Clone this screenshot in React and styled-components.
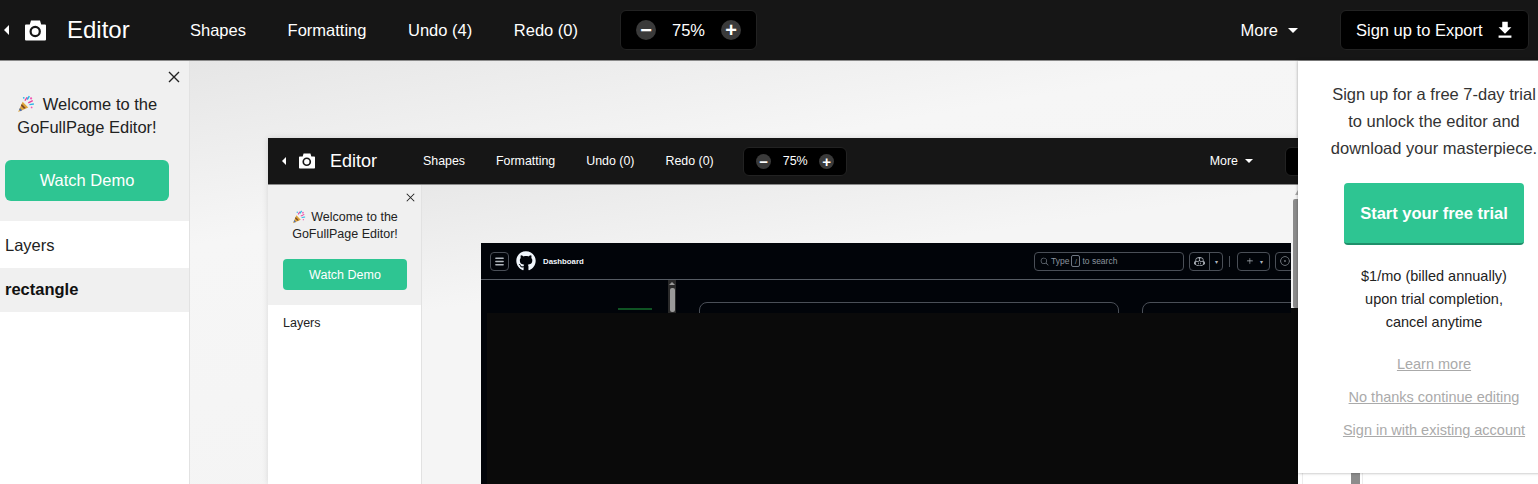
import React from 'react';
import styled, { createGlobalStyle, ThemeProvider, useTheme } from 'styled-components';
import { FaGithub } from 'react-icons/fa';
import { GoCopilot, GoSearch, GoIssueOpened, GoPlus } from 'react-icons/go';
import { Menu } from 'lucide-react';

const outer = {
  frameWidth: '1538px', frameHeight: '484px', shadow: 'none',
  barHeight: 60, brandWidth: 190, brandPad: 4, caretSize: 5, cameraGap: 16, cameraSize: 21, titleGap: 21,
  titleFont: 24, navFont: 16.5, navGap: 41.6,
  zoomGap: 42, zoomWidth: 137, zoomHeight: 40, zoomPad: 15, zoomFont: 16.5, circle: 20, circleIcon: 12,
  moreCaret: 10, moreGap: 10, exportWidth: 189, exportRight: 9, exportGap: 42, exportFont: 16.5, exportIcon: 22,
  sideWidth: 190, sidePadLeft: 5, sidePadRight: 20, welcomeTop: 32, welcomeFont: 16.5, welcomeLine: 23,
  popper: 18, popperGap: 8, welcomeGap: 21, demoHeight: 41, demoFont: 16.5, demoRadius: 6, demoBottom: 20,
  rowHeight: 47, rowNudge: 1, rowFont: 16.5, closeSize: 12, closeTop: 10, closeRight: 9,
  canvasPad: '77px 0 0 78px',
  canvasBg: 'linear-gradient(170deg, #e6e6e6 0%, #f6f6f6 28%, #f3f3f3 100%)',
};

const nested = {
  ...outer,
  frameWidth: '1270px', frameHeight: '346px', shadow: '0 0 6px rgba(0, 0, 0, 0.12)',
  barHeight: 46, brandWidth: 155, brandPad: 14, caretSize: 4, cameraGap: 13, cameraSize: 16, titleGap: 15,
  titleFont: 18, navFont: 12.4, navGap: 31,
  zoomGap: 29.5, zoomWidth: 104, zoomHeight: 29, zoomPad: 12, zoomFont: 12.5, circle: 15, circleIcon: 9,
  moreCaret: 8, moreGap: 7, exportWidth: 145, exportRight: 108, exportGap: 32, exportFont: 12.5, exportIcon: 16,
  sideWidth: 154, sidePadLeft: 15, sidePadRight: 14, welcomeTop: 24, welcomeFont: 12.5, welcomeLine: 17,
  popper: 14, popperGap: 5, welcomeGap: 16, demoHeight: 31, demoFont: 12.5, demoRadius: 4, demoBottom: 15,
  rowHeight: 36, rowNudge: 0, rowFont: 12.5, closeSize: 9, closeTop: 8, closeRight: 6,
  canvasPad: '58px 0 0 59px',
  canvasBg: 'linear-gradient(172deg, #e8e8e8 0%, #f5f5f5 30%)',
};

const CameraIcon = ({ size }) => (
  <svg width={size} height={size} viewBox="0 0 21 20">
    <path
      d="M6 0h9l1.2 4H20a1 1 0 011 1v14a1 1 0 01-1 1H1a1 1 0 01-1-1V5a1 1 0 011-1h3.8z"
      fill="#fff"
    />
    <circle cx="10.2" cy="11" r="4.6" fill="#fff" stroke="#161616" strokeWidth="2.2" />
  </svg>
);

const PartyPopper = ({ size }) => (
  <svg width={size} height={size} viewBox="0 0 16 16" style={{ verticalAlign: '-3px' }}>
    <path d="M1 15 L5 6 L10 11 Z" fill="#e0a63a" />
    <path d="M2.6 11.5 L4.6 13.6 L3 14.4 L1.9 13.2 Z" fill="#4a6fb5" />
    <path d="M4.2 8 L7.8 11.6 L6.2 12.3 L3.5 9.6 Z" fill="#7a4a2a" />
    <path d="M7 5 L9 2" stroke="#e83e9c" strokeWidth="1.2" />
    <path d="M10 7 L14 5" stroke="#e83e9c" strokeWidth="1.2" />
    <path d="M9 4 L11 1" stroke="#2eb4e6" strokeWidth="1.4" />
    <path d="M11 8.5 L15 8" stroke="#2eb4e6" strokeWidth="1.2" />
    <circle cx="12.5" cy="3" r="1" fill="#f25ab5" />
    <circle cx="6" cy="2.5" r="0.8" fill="#2eb4e6" />
    <circle cx="13" cy="11" r="0.8" fill="#f25ab5" />
  </svg>
);

const DownloadIcon = ({ size }) => (
  <svg width={size} height={size} viewBox="0 0 24 24" fill="#fff">
    <path d="M19 9h-4V3H9v6H5l7 7 7-7zM5 18v2.4h14V18H5z" />
  </svg>
);

const CloseIcon = ({ size }) => (
  <svg width={size} height={size} viewBox="0 0 12 12" stroke="#222" strokeWidth="1.4">
    <path d="M1 1 L11 11 M11 1 L1 11" />
  </svg>
);

const EditorFrame = ({ undo, children, layers, after }) => {
  const theme = useTheme();
  return (
    <Frame>
      <TopBar>
        <Brand>
          <BackCaret />
          <CameraSlot><CameraIcon size={theme.cameraSize} /></CameraSlot>
          <Title>Editor</Title>
        </Brand>
        <NavRow>
          <NavItem>Shapes</NavItem>
          <NavItem>Formatting</NavItem>
          <NavItem>Undo ({undo})</NavItem>
          <NavItem>Redo (0)</NavItem>
        </NavRow>
        <ZoomBox>
          <ZoomCircle>&minus;</ZoomCircle>
          <span>75%</span>
          <ZoomCircle>+</ZoomCircle>
        </ZoomBox>
        <More>More<MoreCaret /></More>
        <ExportButton>
          Sign up to Export
          <DownloadIcon size={theme.exportIcon} />
        </ExportButton>
      </TopBar>
      <Body>
        <Sidebar>
          <CloseButton><CloseIcon size={theme.closeSize} /></CloseButton>
          <Welcome>
            <PopperSlot><PartyPopper size={theme.popper} /></PopperSlot>
            Welcome to the<br />GoFullPage Editor!
          </Welcome>
          <DemoButton>Watch Demo</DemoButton>
          <LayersList>
            <LayerRow>Layers</LayerRow>
            {layers}
          </LayersList>
        </Sidebar>
        <Canvas>{children}</Canvas>
        {after}
      </Body>
    </Frame>
  );
};

const GithubPage = () => (
  <Shot>
    <ShotHeader>
      <ShotButton $w={19}><Menu size={11} strokeWidth={3} /></ShotButton>
      <FaGithub size={20} color="#f0f6fc" />
      <ShotTitle>Dashboard</ShotTitle>
      <SearchBox>
        <GoSearch size={9} />
        <span>Type</span>
        <SlashKey>/</SlashKey>
        <span>to search</span>
      </SearchBox>
      <SplitButton>
        <SplitPart $w={19}><GoCopilot size={11} /></SplitPart>
        <SplitPart $w={12} $divider>▾</SplitPart>
      </SplitButton>
      <HeaderRule />
      <ShotButton $w={33} $pull={2}><GoPlus size={10} /><TinyCaret>▾</TinyCaret></ShotButton>
      <ShotButton $w={19} $pull={3}><GoIssueOpened size={10} /></ShotButton>
    </ShotHeader>
    <ShotBody>
      <GreenBar />
      <ShotScroll><ShotArrow /><ShotThumb /></ShotScroll>
      <ShotCard $w={420} />
      <ShotCard $w={200} />
    </ShotBody>
  </Shot>
);

export default function App() {
  return (
    <ThemeProvider theme={outer}>
      <GlobalStyle />
      <Page>
        <EditorFrame undo={4} layers={<ActiveLayer>rectangle</ActiveLayer>}>
          <ThemeProvider theme={nested}>
            <EditorFrame
              undo={0}
              after={
                <HiddenPanel>
                  <PanelStub><StubThumb /></PanelStub>
                </HiddenPanel>
              }
            >
              <GithubPage />
              <CanvasScroll>
                <CanvasArrow />
                <CanvasThumb />
                <ScrollFoot />
              </CanvasScroll>
              <RectangleLayer />
            </EditorFrame>
          </ThemeProvider>
        </EditorFrame>
        <UpsellPanel>
          <UpsellLead>
            Sign up for a free 7-day trial<br />to unlock the editor and<br />download your masterpiece.
          </UpsellLead>
          <TrialButton>Start your free trial</TrialButton>
          <PriceNote>
            $1/mo (billed annually)<br />upon trial completion,<br />cancel anytime
          </PriceNote>
          <PanelLink>Learn more</PanelLink>
          <PanelLink>No thanks continue editing</PanelLink>
          <PanelLink>Sign in with existing account</PanelLink>
        </UpsellPanel>
      </Page>
    </ThemeProvider>
  );
}

const GlobalStyle = createGlobalStyle`
  html, body {
    margin: 0;
    padding: 0;
    background: #fff;
    overflow: hidden;
  }
  body {
    font-family: "Liberation Sans", Arial, sans-serif;
  }
`;

const Page = styled.div`
  position: relative;
  width: 1538px;
  height: 484px;
  overflow: hidden;
`;

const Frame = styled.div`
  display: flex;
  flex-direction: column;
  flex: none;
  width: ${p => p.theme.frameWidth};
  height: ${p => p.theme.frameHeight};
  box-shadow: ${p => p.theme.shadow};
`;

const TopBar = styled.header`
  display: flex;
  align-items: center;
  flex: none;
  height: ${p => p.theme.barHeight}px;
  border-bottom: 1px solid #8a8a8a;
  background: #161616;
  color: #fff;
`;

const Brand = styled.div`
  display: flex;
  align-items: center;
  flex: none;
  box-sizing: border-box;
  width: ${p => p.theme.brandWidth}px;
  padding-left: ${p => p.theme.brandPad}px;
`;

const BackCaret = styled.span`
  width: 0;
  height: 0;
  border-top: ${p => p.theme.caretSize}px solid transparent;
  border-bottom: ${p => p.theme.caretSize}px solid transparent;
  border-right: ${p => p.theme.caretSize}px solid #fff;
`;

const CameraSlot = styled.span`
  display: inline-flex;
  margin-left: ${p => p.theme.cameraGap}px;
  margin-right: ${p => p.theme.titleGap}px;
`;

const Title = styled.span`
  font-size: ${p => p.theme.titleFont}px;
`;

const NavRow = styled.nav`
  display: flex;
  gap: ${p => p.theme.navGap}px;
`;

const NavItem = styled.span`
  font-size: ${p => p.theme.navFont}px;
`;

const ZoomBox = styled.div`
  display: flex;
  align-items: center;
  justify-content: space-between;
  flex: none;
  box-sizing: border-box;
  margin-left: ${p => p.theme.zoomGap}px;
  padding: 0 ${p => p.theme.zoomPad}px;
  border: 1px solid #222;
  border-radius: 6px;
  width: ${p => p.theme.zoomWidth}px;
  height: ${p => p.theme.zoomHeight}px;
  background: #000;
  font-size: ${p => p.theme.zoomFont}px;
`;

const ZoomCircle = styled.span`
  display: flex;
  align-items: center;
  justify-content: center;
  border-radius: 50%;
  width: ${p => p.theme.circle}px;
  height: ${p => p.theme.circle}px;
  background: #3a3a3a;
  font-size: ${p => p.theme.circle}px;
  font-weight: bold;
  line-height: 1;
`;

const More = styled.span`
  display: flex;
  align-items: center;
  margin-left: auto;
  font-size: ${p => p.theme.navFont}px;
`;

const MoreCaret = styled.span`
  margin-left: ${p => p.theme.moreGap}px;
  border-top: ${p => p.theme.moreCaret / 2}px solid #fff;
  border-left: ${p => p.theme.moreCaret / 2}px solid transparent;
  border-right: ${p => p.theme.moreCaret / 2}px solid transparent;
`;

const ExportButton = styled.div`
  display: flex;
  align-items: center;
  justify-content: space-between;
  flex: none;
  box-sizing: border-box;
  margin-left: ${p => p.theme.exportGap}px;
  margin-right: ${p => p.theme.exportRight}px;
  padding: 0 12px 0 15px;
  border: 1px solid #222;
  border-radius: 6px;
  width: ${p => p.theme.exportWidth}px;
  height: ${p => p.theme.zoomHeight}px;
  background: #000;
  font-size: ${p => p.theme.exportFont}px;
`;

const Body = styled.div`
  display: flex;
  flex: 1;
  min-height: 0;
`;

const Sidebar = styled.aside`
  position: relative;
  flex: none;
  box-sizing: border-box;
  border-right: 1px solid #e2e2e2;
  width: ${p => p.theme.sideWidth}px;
  padding-top: ${p => p.theme.welcomeTop}px;
  overflow: hidden;
  background: #f0f0f0;
`;

const CloseButton = styled.span`
  position: absolute;
  top: ${p => p.theme.closeTop}px;
  right: ${p => p.theme.closeRight}px;
  display: flex;
`;

const Welcome = styled.div`
  padding: 0 ${p => p.theme.sidePadRight}px 0 ${p => p.theme.sidePadLeft}px;
  color: #222;
  font-size: ${p => p.theme.welcomeFont}px;
  line-height: ${p => p.theme.welcomeLine}px;
  text-align: center;
`;

const PopperSlot = styled.span`
  margin-right: ${p => p.theme.popperGap}px;
`;

const DemoButton = styled.div`
  display: flex;
  align-items: center;
  justify-content: center;
  box-sizing: border-box;
  margin: ${p => p.theme.welcomeGap}px ${p => p.theme.sidePadRight}px ${p => p.theme.demoBottom}px ${p => p.theme.sidePadLeft}px;
  border-radius: ${p => p.theme.demoRadius}px;
  height: ${p => p.theme.demoHeight}px;
  background: #2ec592;
  color: #fff;
  font-size: ${p => p.theme.demoFont}px;
`;

const LayersList = styled.div`
  height: 400px;
  background: #fff;
`;

const LayerRow = styled.div`
  display: flex;
  align-items: center;
  box-sizing: border-box;
  height: ${p => p.theme.rowHeight}px;
  padding-top: ${p => p.theme.rowNudge}px;
  padding-left: ${p => p.theme.sidePadLeft}px;
  color: #222;
  font-size: ${p => p.theme.rowFont}px;
`;

const ActiveLayer = styled(LayerRow)`
  height: 44px;
  padding-top: 0;
  padding-bottom: 2px;
  background: #f0f0f0;
  color: #111;
  font-weight: bold;
`;

const Canvas = styled.main`
  position: relative;
  display: flex;
  flex: 1;
  min-width: 0;
  padding: ${p => p.theme.canvasPad};
  overflow: hidden;
  background: ${p => p.theme.canvasBg};
`;

const Shot = styled.section`
  flex: 1;
  min-width: 0;
  background: #010409;
`;

const ShotHeader = styled.div`
  display: flex;
  align-items: center;
  gap: 7px;
  box-sizing: border-box;
  border-bottom: 1px solid #555b63;
  height: 37px;
  padding: 0 0 0 9px;
  overflow: hidden;
  color: #b0b6bd;
`;

const ShotButton = styled.span`
  display: flex;
  align-items: center;
  justify-content: center;
  flex: none;
  box-sizing: border-box;
  margin-right: ${p => -(p.$pull || 0)}px;
  border: 1px solid #4a4f57;
  border-radius: 4px;
  width: ${p => p.$w}px;
  height: 19px;
  color: #b0b6bd;
`;

const TinyCaret = styled.span`
  margin-left: 5px;
  font-size: 6px;
`;

const ShotTitle = styled.span`
  margin-right: auto;
  color: #f0f6fc;
  font-size: 7.8px;
  font-weight: bold;
`;

const SearchBox = styled.div`
  display: flex;
  align-items: center;
  gap: 2px;
  flex: none;
  box-sizing: border-box;
  margin-right: -2px;
  border: 1px solid #4a4f57;
  border-radius: 4px;
  width: 150px;
  height: 19px;
  padding-left: 5px;
  color: #8b949e;
  font-size: 8.5px;
`;

const SlashKey = styled.span`
  display: flex;
  align-items: center;
  justify-content: center;
  border: 1px solid #6e7681;
  border-radius: 2px;
  width: 7px;
  height: 10px;
  font-size: 7px;
`;

const SplitButton = styled.div`
  display: flex;
  flex: none;
  box-sizing: border-box;
  margin-right: -1px;
  border: 1px solid #4a4f57;
  border-radius: 4px;
  height: 19px;
  color: #b0b6bd;
`;

const SplitPart = styled.span`
  display: flex;
  align-items: center;
  justify-content: center;
  width: ${p => p.$w}px;
  border-left: ${p => (p.$divider ? '1px solid #4a4f57' : 'none')};
  font-size: 6px;
`;

const HeaderRule = styled.span`
  flex: none;
  width: 1px;
  height: 11px;
  background: #4a4f57;
`;

const ShotBody = styled.div`
  display: flex;
  align-items: flex-start;
  height: 34px;
  padding-left: 137px;
  overflow: hidden;
`;

const GreenBar = styled.span`
  flex: none;
  margin-top: 28px;
  width: 34px;
  height: 2px;
  background: #0f5323;
`;

const ShotScroll = styled.div`
  display: flex;
  flex-direction: column;
  align-items: center;
  flex: none;
  margin-left: 16px;
  width: 8px;
  height: 34px;
  background: #2a2a2a;
`;

const ShotArrow = styled.span`
  margin-top: 2px;
  border-bottom: 3px solid #999;
  border-left: 3px solid transparent;
  border-right: 3px solid transparent;
`;

const ShotThumb = styled.span`
  margin-top: 3px;
  border-radius: 2px;
  width: 5px;
  height: 24px;
  background: #999;
`;

const ShotCard = styled.div`
  flex: none;
  box-sizing: border-box;
  margin: 22px 0 0 23px;
  border: 1px solid #4a4f57;
  border-radius: 8px;
  width: ${p => p.$w}px;
  height: 40px;
`;

const CanvasScroll = styled.div`
  display: flex;
  flex-direction: column;
  align-items: flex-end;
  flex: none;
  margin-top: -53px;
  width: 7px;
`;

const CanvasArrow = styled.span`
  border-bottom: 5px solid #aaa;
  border-left: 3px solid transparent;
`;

const CanvasThumb = styled.span`
  margin-top: 4px;
  border-radius: 2px 0 0 2px;
  width: 5px;
  height: 109px;
  background: #8c8c8c;
`;

const ScrollFoot = styled.span`
  width: 7px;
  height: 6px;
  background: #0a0a0a;
`;

const RectangleLayer = styled.div`
  position: absolute;
  top: 128px;
  right: 0;
  bottom: 0;
  left: 65px;
  background: #0a0a0a;
`;

const HiddenPanel = styled.div`
  display: flex;
  align-items: flex-end;
  flex: none;
  width: 240px;
  background: #fff;
`;

const PanelStub = styled.div`
  box-sizing: border-box;
  margin-left: 4px;
  border-left: 1px solid #ececec;
  border-right: 1px solid #ececec;
  width: 61px;
  height: 11px;
  padding-left: 48px;
`;

const StubThumb = styled.div`
  width: 9px;
  height: 100%;
  background: #8c8c8c;
`;

const UpsellPanel = styled.aside`
  position: absolute;
  top: 61px;
  right: -32px;
  display: flex;
  flex-direction: column;
  align-items: center;
  box-sizing: border-box;
  width: 272px;
  height: 412px;
  padding-top: 20px;
  background: #fff;
  box-shadow: 0 0 3px rgba(0, 0, 0, 0.35);
`;

const UpsellLead = styled.div`
  color: #333;
  font-size: 16.5px;
  line-height: 27px;
  text-align: center;
  white-space: nowrap;
`;

const TrialButton = styled.div`
  display: flex;
  align-items: center;
  justify-content: center;
  box-sizing: border-box;
  margin-top: 21px;
  border-bottom: 2px solid #1f8f6a;
  border-radius: 4px;
  width: 180px;
  height: 62px;
  background: #2ec592;
  color: #fff;
  font-size: 16.5px;
  font-weight: bold;
`;

const PriceNote = styled.div`
  margin-top: 20px;
  margin-bottom: 22px;
  color: #222;
  font-size: 14.5px;
  line-height: 23px;
  text-align: center;
`;

const PanelLink = styled.a`
  margin-bottom: 16px;
  color: #aaa;
  font-size: 14.5px;
  line-height: 17px;
  text-decoration: underline;
`;
